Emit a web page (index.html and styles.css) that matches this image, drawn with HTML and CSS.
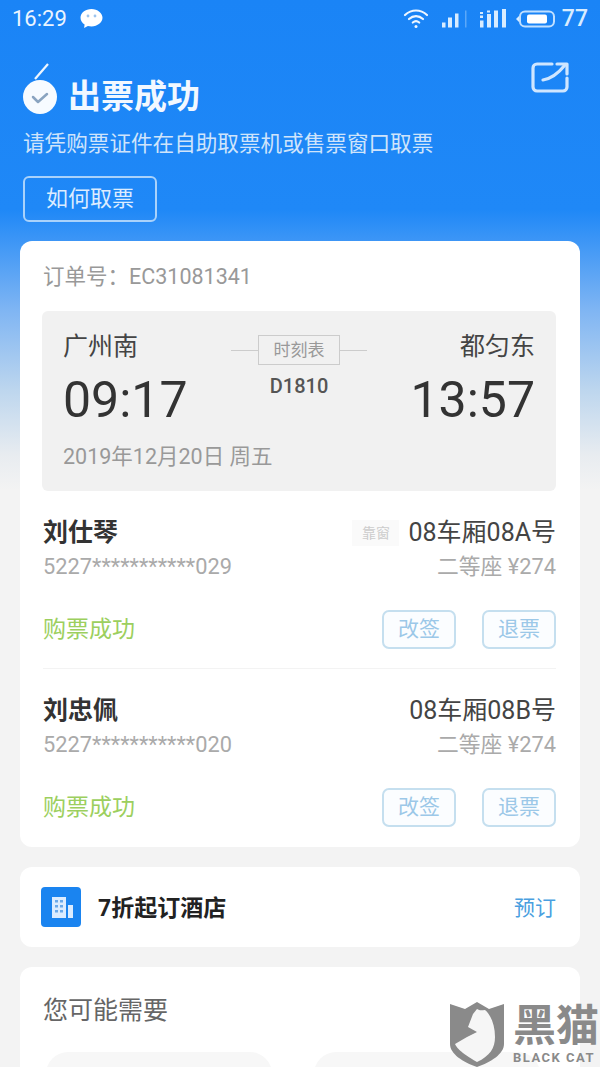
FILE: index.html
```html
<!DOCTYPE html>
<html lang="zh-CN">
<head>
  <meta charset="UTF-8">
  <meta name="viewport" content="width=device-width, initial-scale=1.0">
  <title>出票成功</title>
  <link rel="stylesheet" href="styles.css">
</head>
<body>
  <div class="page">
    <div class="statusbar">
      <div class="status-left">
        <span class="clock">16:29</span>
        <svg class="chat-icon" width="25" height="22" viewBox="0 0 24 22">
          <path fill="#fff" d="M12 1C5.900 1 1 4.900 1 9.800c0 2.800 1.600 5.200 4.100 6.800L4.600 20l3.800-2.100c1.100.3 2.300.5 3.600.5 6.100 0 11-3.900 11-8.600S18.100 1 12 1z"/>
          <circle cx="8.500" cy="8" r="1.400" fill="#9cc4ee"/>
          <circle cx="15.500" cy="8" r="1.400" fill="#9cc4ee"/>
        </svg>
      </div>
      <div class="status-right">
        <svg class="wifi" width="26" height="22" viewBox="0 0 26 22" fill="none" stroke="#eef6ff" stroke-width="2.200" stroke-linecap="round">
          <path d="M2 7c6.500-6 15.500-6 22 0"/>
          <path d="M6 11c4.200-3.800 9.800-3.800 14 0"/>
          <path d="M9.800 14.500c2-1.600 4.400-1.600 6.400 0"/>
          <circle cx="13" cy="18.500" r="1.500" fill="#eef6ff" stroke="none"/>
        </svg>
        <svg class="signal-a" width="26" height="22" viewBox="0 0 26 22" fill="#d8ecff">
          <rect x="1" y="14.500" width="3.500" height="5"/>
          <rect x="7" y="9.500" width="4" height="10"/>
          <rect x="14" y="5.500" width="3.500" height="14"/>
          <rect x="24" y="2.500" width="1.500" height="17" opacity=".35"/>
        </svg>
        <svg class="signal-b" width="28" height="22" viewBox="0 0 28 22" fill="#d8ecff">
          <rect x="1" y="12.500" width="3.500" height="7"/>
          <rect x="1" y="4" width="3" height="2"/>
          <rect x="1" y="7.500" width="3" height="2.500"/>
          <rect x="8" y="6" width="4" height="13.500"/>
          <rect x="8" y="2.500" width="3" height="2"/>
          <rect x="15" y="2.500" width="4" height="17"/>
          <rect x="23" y="1" width="4" height="18.500"/>
        </svg>
        <svg class="battery" width="40" height="22" viewBox="0 0 40 22">
          <path fill="#d8ecff" d="M0 11l3.500-3.500v7z"/>
          <rect x="4" y="3.500" width="34" height="15" rx="5" fill="none" stroke="#bfdfff" stroke-width="2"/>
          <rect x="11" y="6.500" width="20" height="9" rx="2" fill="#fff"/>
        </svg>
        <span class="battery-num">77</span>
      </div>
    </div>

    <header class="hero">
      <div class="hero-top">
        <div class="hero-title">
          <svg class="ok-icon" width="36" height="54" viewBox="0 0 36 54">
            <path d="M12 17L25 2" stroke="#eef6ff" stroke-width="2.200" fill="none"/>
            <circle cx="17" cy="35" r="17" fill="#f7fbff"/>
            <path d="M10 35l5 5 9-8" stroke="#8aa4c0" stroke-width="2.500" fill="none" stroke-linecap="round" stroke-linejoin="round"/>
          </svg>
          <h1>出票成功</h1>
        </div>
        <svg class="share-icon" width="40" height="34" viewBox="0 0 40 34" fill="none" stroke="#cfe6ff" stroke-width="3.200" stroke-linecap="round" stroke-linejoin="round">
          <path d="M22 4H7a4 4 0 0 0-4 4v19a4 4 0 0 0 4 4h26a4 4 0 0 0 4-4V18"/>
          <path d="M13 20c6-1 14-5 22-15"/>
          <path d="M27 4h10v10"/>
        </svg>
      </div>
      <p class="hero-tip">请凭购票证件在自助取票机或售票窗口取票</p>
      <a class="how-btn">如何取票</a>
    </header>

    <main class="cards">
      <section class="card order-card">
        <div class="order-no">订单号：EC31081341</div>
        <div class="trip">
          <div class="trip-side">
            <div class="station">广州南</div>
            <div class="time">09:17</div>
          </div>
          <div class="trip-mid">
            <div class="timetable"><span class="line"></span><span class="tt-label">时刻表</span><span class="line"></span></div>
            <div class="train-no">D1810</div>
          </div>
          <div class="trip-side align-right">
            <div class="station">都匀东</div>
            <div class="time">13:57</div>
          </div>
          <div class="trip-date">2019年12月20日 周五</div>
        </div>

        <div class="passenger">
          <div class="row">
            <div class="name">刘仕琴</div>
            <div class="seat"><span class="seat-tag">靠窗</span>08车厢08A号</div>
          </div>
          <div class="row sub">
            <div class="id-no">5227***********029</div>
            <div class="fare">二等座 ¥274</div>
          </div>
          <div class="row actions">
            <div class="state">购票成功</div>
            <div class="btns"><a class="btn">改签</a><a class="btn">退票</a></div>
          </div>
        </div>
        <div class="passenger">
          <div class="row">
            <div class="name">刘忠佩</div>
            <div class="seat">08车厢08B号</div>
          </div>
          <div class="row sub">
            <div class="id-no">5227***********020</div>
            <div class="fare">二等座 ¥274</div>
          </div>
          <div class="row actions">
            <div class="state">购票成功</div>
            <div class="btns"><a class="btn">改签</a><a class="btn">退票</a></div>
          </div>
        </div>
      </section>

      <section class="card hotel-card">
        <svg class="hotel-icon" width="40" height="40" viewBox="0 0 40 40">
          <rect width="40" height="40" rx="4" fill="#1a84f0"/>
          <rect x="11" y="10" width="14" height="21" fill="#dcecff"/>
          <rect x="27" y="18" width="5" height="13" fill="#dcecff"/>
          <g fill="#6aa9ea">
            <rect x="14" y="13" width="3" height="2.500"/><rect x="19" y="13" width="3" height="2.500"/>
            <rect x="14" y="18" width="3" height="2.500"/><rect x="19" y="18" width="3" height="2.500"/>
            <rect x="14" y="23" width="3" height="2.500"/><rect x="19" y="23" width="3" height="2.500"/>
          </g>
        </svg>
        <div class="hotel-text">7折起订酒店</div>
        <a class="hotel-link">预订</a>
      </section>

      <section class="card more-card">
        <h2>您可能需要</h2>
        <div class="more-list">
          <div class="more-item"></div>
          <div class="more-item"></div>
        </div>
      </section>
    </main>

    <div class="watermark">
      <svg width="54" height="65" viewBox="0 0 54 65">
        <path fill="#8a8a8a" d="M0 2l15 5L27 0l12 7 15-5v40c0 10-13 18-27 23C13 60 0 52 0 42z"/>
        <path fill="#f6f6f6" d="M27 7l-4 5-5 13 9 5-10 5-12 7c2 4 5 8 22 18 13-6 18-14 18-25 0-12-4-22-10-27-3 0-5 1-8-1z"/>
      </svg>
      <div class="wm-text">
        <div class="wm-cn">黑猫</div>
        <div class="wm-en">BLACK CAT</div>
      </div>
    </div>
  </div>
</body>
</html>
```

FILE: styles.css
```css
body {
  margin: 0;
  font-family: "Roboto", "Noto Sans CJK SC", sans-serif;
  color: #333;
}
h1, h2, p {
  margin: 0;
  font-weight: normal;
}
.page {
  position: relative;
  width: 600px;
  height: 1067px;
  overflow: hidden;
  background: linear-gradient(#1a84f6 0, #1f88f7 210px, #7fb5f3 310px, #bdd6ee 390px, #e8ecf0 455px, #f3f3f3 490px);
}

/* status bar */
.statusbar {
  display: flex;
  justify-content: space-between;
  align-items: center;
  height: 37px;
  padding: 0 12px;
  color: #eaf4ff;
}
.status-left, .status-right {
  display: flex;
  align-items: center;
}
.status-left {
  gap: 12px;
}
.clock {
  font-size: 22px;
}
.signal-a {
  margin-left: 12px;
}
.signal-b {
  margin-left: 12px;
}
.battery {
  margin-left: 9px;
}
.battery-num {
  margin-left: 6px;
  font-size: 23px;
  font-weight: 500;
  color: #d8ecff;
}

/* blue header */
.hero {
  height: 204px;
  padding: 0 23px;
  box-sizing: border-box;
  color: #fff;
}
.hero-top {
  display: flex;
  justify-content: space-between;
  align-items: flex-start;
  height: 80px;
}
.hero-title {
  display: flex;
  align-items: flex-end;
  gap: 9px;
  margin-top: 28px;
  height: 54px;
}
.hero-title h1 {
  font-size: 33px;
  font-weight: 700;
  line-height: 44px;
  color: #f2f8ff;
}
.ok-icon {
  align-self: flex-start;
  margin-top: -3px;
}
.share-icon {
  margin: 23px 7px 0 0;
}
.hero-tip {
  margin-top: 12px;
  font-size: 21.600px;
  line-height: 30px;
  color: #cfe4fb;
}
.how-btn {
  display: block;
  width: 134px;
  height: 46px;
  margin-top: 17px;
  box-sizing: border-box;
  border: 2px solid #a9d2fb;
  border-radius: 6px;
  text-align: center;
  font-size: 22px;
  line-height: 41px;
  color: #dcecff;
}

/* cards */
.cards {
  display: flex;
  flex-direction: column;
  gap: 20px;
  padding: 0 20px;
}
.card {
  background: #fff;
  border-radius: 12px;
}
.order-card {
  height: 606px;
  padding: 20px 24px 0 23px;
  box-sizing: border-box;
}
.order-no {
  font-size: 21.500px;
  line-height: 32px;
  color: #999;
}
.trip {
  display: grid;
  grid-template-columns: 1fr auto 1fr;
  grid-template-rows: auto 1fr;
  margin: 18px 0 0 -1px;
  height: 180px;
  padding: 18px 21px 0;
  box-sizing: border-box;
  background: #f1f1f1;
  border-radius: 6px;
}
.station {
  font-size: 25px;
  line-height: 36px;
  color: #444;
}
.time {
  font-size: 50px;
  line-height: 66px;
  margin-top: 2px;
  color: #333;
}
.align-right {
  text-align: right;
}
.trip-mid {
  padding-top: 6px;
}
.timetable {
  display: flex;
  align-items: center;
}
.line {
  width: 27px;
  height: 1px;
  background: #ccc;
}
.tt-label {
  width: 82px;
  height: 30px;
  box-sizing: border-box;
  border: 1px solid #ccc;
  text-align: center;
  font-size: 17px;
  line-height: 28px;
  color: #999;
}
.train-no {
  margin-top: 9px;
  text-align: center;
  font-size: 20px;
  font-weight: 500;
  line-height: 24px;
  color: #555;
}
.trip-date {
  grid-column: 1 / 4;
  font-size: 21.500px;
  line-height: 30px;
  color: #999;
  margin-top: 9px;
}

/* passengers */
.passenger {
  height: 178px;
  box-sizing: border-box;
  padding-top: 24px;
  border-bottom: 1px solid #f3f3f3;
}
.passenger:last-child {
  border-bottom: 0;
}
.row {
  display: flex;
  justify-content: space-between;
  align-items: center;
}
.name {
  font-size: 25px;
  font-weight: 700;
  line-height: 36px;
  color: #333;
}
.seat {
  display: flex;
  align-items: center;
  font-size: 25px;
  line-height: 36px;
  color: #444;
}
.seat-tag {
  width: 47px;
  margin-right: 9px;
  background: #fafafa;
  text-align: center;
  font-size: 14px;
  line-height: 26px;
  color: #ccc;
}
.sub {
  margin-top: 1px;
  font-size: 21.800px;
  line-height: 30px;
  color: #aaa;
}
.actions {
  margin-top: 28px;
}
.state {
  font-size: 23px;
  line-height: 30px;
  color: #9ccf5e;
}
.btns {
  display: flex;
  gap: 26px;
}
.btn {
  display: block;
  width: 74px;
  height: 39px;
  box-sizing: border-box;
  border: 2px solid #c5dfef;
  border-radius: 7px;
  background: #fbfdff;
  text-align: center;
  font-size: 21px;
  line-height: 35px;
  color: #9cc8e8;
}

/* hotel entry */
.hotel-card {
  display: flex;
  align-items: center;
  height: 80px;
  padding: 0 24px 0 21px;
}
.hotel-text {
  flex: 1;
  margin-left: 17px;
  padding-bottom: 3px;
  font-size: 23px;
  font-weight: 700;
  color: #222;
}
.hotel-link {
  padding-bottom: 2px;
  font-size: 21px;
  color: #4a9fe0;
}

/* suggestions */
.more-card {
  height: 140px;
  padding: 26px 0 0 23px;
  box-sizing: border-box;
}
.more-card h2 {
  font-size: 25px;
  line-height: 36px;
  color: #666;
}
.more-list {
  display: flex;
  gap: 42px;
  margin: 23px 0 0 3px;
}
.more-item {
  width: 226px;
  height: 60px;
  background: #f7f7f7;
  border-radius: 22px;
}

/* site mark in the corner */
.watermark {
  position: absolute;
  left: 450px;
  top: 1002px;
  display: flex;
  gap: 9px;
}
.wm-text {
  color: #8a8a8a;
}
.wm-cn {
  font-size: 43px;
  font-weight: 700;
  line-height: 48px;
}
.wm-en {
  font-size: 13px;
  font-weight: 700;
  letter-spacing: 1.500px;
  line-height: 16px;
}
```
